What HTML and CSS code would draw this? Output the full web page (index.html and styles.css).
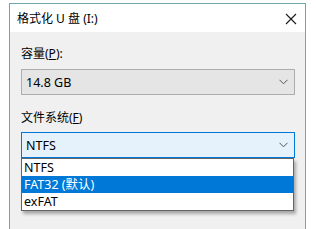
FILE: index.html
```html
<!DOCTYPE html>
<html lang="zh-CN">
<head>
  <meta charset="UTF-8" />
  <title>格式化 U 盘 (I:)</title>
  <link rel="stylesheet" href="styles.css">
</head>
<body>

  <!-- JANELA -->
  <div class="janela">
    <div class="titulo">
      <span>格式化 U 盘 (I:)</span>
      <svg class="fechar" width="12" height="12" viewBox="0 0 12 12">
        <path d="M1 1 L11 11 M11 1 L1 11" stroke="#1a1a1a" stroke-width="1.1" fill="none"/>
      </svg>
    </div>

    <div class="conteudo">
      <label class="rotulo">容量(<u>P</u>):</label>
      <div class="combo">
        <span>14.8 GB</span>
        <svg class="seta" width="9" height="6" viewBox="0 0 9 6">
          <path d="M0.5 0.8 L4.5 4.8 L8.5 0.8" stroke="#555" stroke-width="1" fill="none"/>
        </svg>
      </div>

      <label class="rotulo">文件系统(<u>F</u>)</label>
      <div class="combo-wrap">
        <div class="combo ativo">
          <span>NTFS</span>
          <svg class="seta" width="9" height="6" viewBox="0 0 9 6">
            <path d="M0.5 0.8 L4.5 4.8 L8.5 0.8" stroke="#555" stroke-width="1" fill="none"/>
          </svg>
        </div>
        <ul class="lista">
          <li>NTFS</li>
          <li class="selecionado">FAT32 (默认)</li>
          <li>exFAT</li>
        </ul>
      </div>
    </div>
  </div>

</body>
</html>
```

FILE: styles.css
```css
* {
  margin: 0;
  padding: 0;
  box-sizing: border-box;
}

html, body {
  height: 100%;
  overflow: hidden;
}

body {
  font-family: "Noto Sans", "Noto Sans CJK SC", sans-serif;
  font-size: 12px;
  background-color: #fff;
  color: #000;
  padding: 3px 10px 0 9px;
}

.janela {
  border: 1px solid #6fa7ae;
  border-bottom: none;
  height: 100%;
  background-color: #f0f0f0;
}

.titulo {
  background-color: #fff;
  height: 28px;
  display: flex;
  justify-content: space-between;
  align-items: center;
  padding: 0 8px 0 7px;
}

.fechar {
  margin-top: 1px;
}

.conteudo {
  padding: 14px 10px 0 11px;
}

.rotulo {
  display: block;
  line-height: 16px;
  height: 16px;
}

.rotulo + .combo {
  margin-top: 7px;
  margin-bottom: 15px;
}

.rotulo + .combo-wrap {
  margin-top: 6px;
}

.combo {
  height: 26px;
  border: 1px solid #adadad;
  background-color: #e5e5e5;
  display: flex;
  justify-content: space-between;
  align-items: center;
  padding: 0 6px 0 4px;
  font-size: 12.5px;
}

.combo.ativo {
  background-color: #e5f1fb;
  border-color: #0078d7;
}

.combo-wrap {
  position: relative;
}

.lista {
  position: absolute;
  top: 100%;
  left: 0;
  right: 1px;
  list-style: none;
  background-color: #fff;
  border: 1px solid #646464;
  box-shadow: 2px 3px 3px rgba(0,0,0,0.3);
}

.lista li {
  height: 17px;
  line-height: 17px;
  padding-left: 2px;
  font-size: 12.5px;
}

.lista li.selecionado {
  background-color: #0078d7;
  color: #fff;
}
```
